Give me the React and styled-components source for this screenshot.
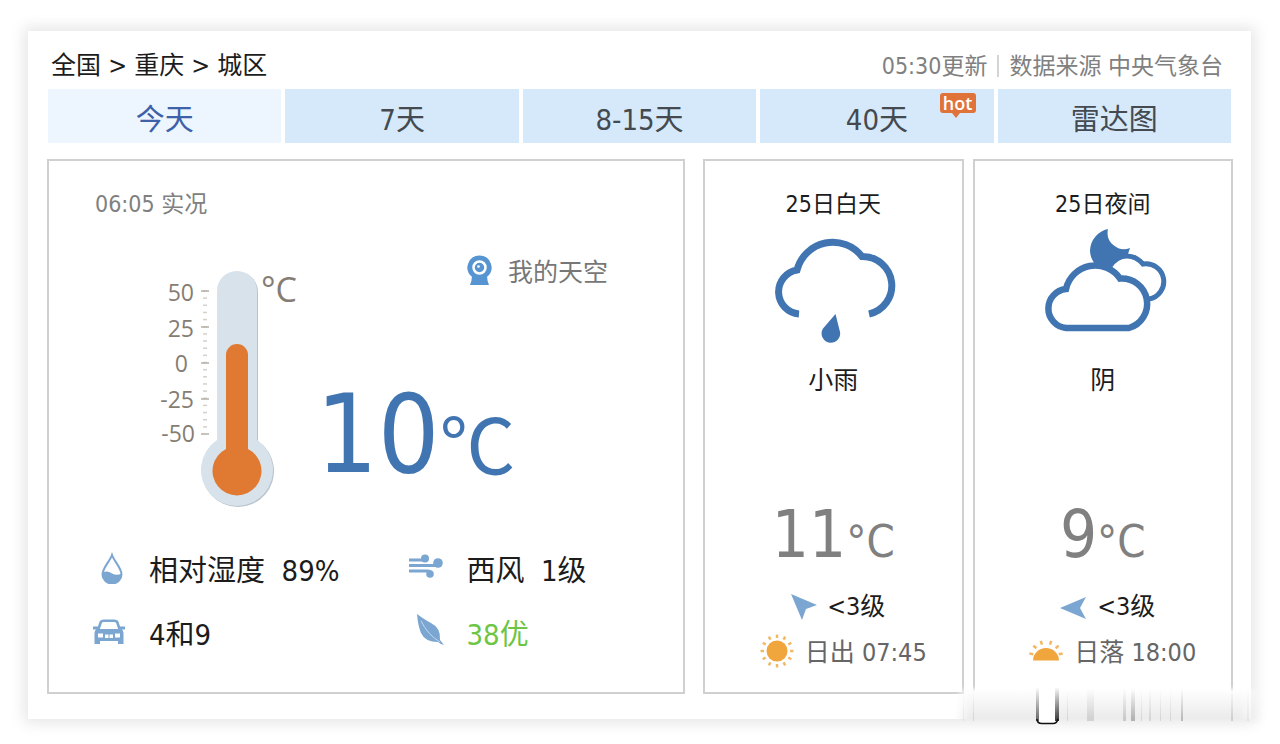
import React from "react";
import styled, { createGlobalStyle } from "styled-components";

const latin = '"DejaVu Sans Condensed", "Tahoma", "Noto Sans"';
const BLUE = "#4175b2";
const SOFT = "#7ba6d1";

const GlobalStyle = createGlobalStyle`
  *, *::before, *::after { box-sizing: border-box; }
  body {
    margin: 0;
    background: #fff;
    color: #1c1c1c;
    font-family: ${latin}, "Noto Sans CJK SC", sans-serif;
  }
  a { color: inherit; text-decoration: none; }
`;

const Page = styled.div`
  padding: 31px 29px 24px 28px;
`;

const Panel = styled.main`
  position: relative;
  padding: 16px 20px 25px;
  background: #fff;
  box-shadow: 0 0 14px 4px rgba(0, 0, 0, 0.1);
`;

const Header = styled.header`
  display: flex;
  justify-content: space-between;
  height: 42px;
  padding: 0 8px 0 3px;
  line-height: 38px;
`;

const Breadcrumb = styled.nav`
  font-size: 25px;
`;

const Source = styled.div`
  display: flex;
  align-items: center;
  height: 38px;
  font-size: 23px;
  color: #808080;
`;

const Divider = styled.span`
  width: 2px;
  height: 22px;
  margin: 0 10px;
  background: #d4d4d4;
`;

const Tabs = styled.nav`
  display: flex;
  gap: 4px;
`;

const Tab = styled.a`
  position: relative;
  flex: 1;
  height: 54px;
  line-height: 62px;
  font-size: 29px;
  text-align: center;
  color: ${(p) => (p.$active ? "#3d62a8" : "#444a50")};
  background: ${(p) => (p.$active ? "#edf6fe" : "#d5e9fb")};
`;

const Hot = styled.span`
  position: absolute;
  top: 4px;
  right: 18px;
  width: 36px;
  height: 20px;
  border-radius: 3px;
  background: #e0733a;
  color: #fff;
  font: 600 18px/20px "Open Sans", sans-serif;

  &::after {
    content: "";
    position: absolute;
    left: 12px;
    top: 20px;
    border: 4px solid transparent;
    border-top: 5px solid #e0733a;
    border-bottom: 0;
  }
`;

const Cards = styled.div`
  display: grid;
  grid-template-columns: minmax(0, 638fr) minmax(0, 530fr);
  gap: 18px;
  margin: 16px -2px 0 -1px;
`;

const Pair = styled.div`
  display: grid;
  grid-template-columns: 1fr 1fr;
  gap: 9px;
`;

const Card = styled.section`
  border: 2px solid #d0d0d0;
`;

const NowCard = styled(Card)`
  padding: 24px 0 28px 42px;
`;

const Observed = styled.div`
  padding-left: 4px;
  font-size: 23px;
  line-height: 38px;
  color: #808080;
`;

const Scene = styled.div`
  display: flex;
  align-items: flex-end;
  gap: 16px;
  height: 260px;
  margin: 27px 0 26px;
  padding-left: 65px;
`;

const Reading = styled.div`
  display: flex;
  flex-direction: column;
  justify-content: space-between;
  height: 260px;
  padding-bottom: 15px;
`;

const SkyLink = styled.a`
  display: flex;
  align-items: center;
  gap: 16px;
  height: 40px;
  margin-left: 151px;
  font-size: 25px;
  color: #777;
`;

const NowTemp = styled.div`
  display: flex;
  align-items: flex-start;
  height: 120px;
  font-size: 108px;
  line-height: 120px;
  color: ${BLUE};
`;

const Celsius = styled.span`
  margin-top: 28px;
  font: 76px/76px "Noto Sans CJK SC", sans-serif;
`;

const Stats = styled.div`
  display: grid;
  grid-template-columns: 318fr 275fr;
`;

const Stat = styled.div`
  display: flex;
  align-items: center;
  gap: 22px;
  height: 64px;
  font-size: 29px;
  white-space: pre;
  color: ${(p) => (p.$good ? "#6cc644" : "inherit")};
`;

const IconBox = styled.span`
  display: flex;
  justify-content: center;
  width: 36px;
`;

const DayCard = styled(Card)`
  display: flex;
  flex-direction: column;
  align-items: center;
  padding: 24px 0 19px;
`;

const DayTitle = styled.h2`
  margin: 0 0 5px;
  font-size: 23px;
  font-weight: 400;
  line-height: 38px;
`;

const Condition = styled.div`
  margin: 18px 0 95px;
  font-size: 25px;
  line-height: 38px;
`;

const DayTemp = styled.div`
  height: 78px;
  margin-bottom: 8px;
  font-size: 65px;
  line-height: 80px;
  color: #808080;
`;

const DayUnit = styled.span`
  font-size: 45px;
  line-height: 1;
`;

const Line = styled.div`
  display: flex;
  align-items: center;
  gap: ${(p) => p.$gap}px;
  height: 46px;
  padding-left: ${(p) => p.$indent}px;
  font-size: 25px;
  color: ${(p) => p.$color || "inherit"};
`;

const Smear = styled.svg`
  position: absolute;
  right: -12px;
  bottom: -7px;
  width: 308px;
  height: 40px;
`;

const minorTicks = Array.from({ length: 20 }, (_, i) => 27 + i * 7.15);
const scale = [
  ["50", 38, 37, 27],
  ["25", 38, 73, 63],
  ["0", 32, 108, 99],
  ["-25", 38, 144, 135],
  ["-50", 39, 178, 170],
];

function Thermometer() {
  return (
    <svg width="144" height="246" viewBox="0 0 144 246" fontFamily="Open Sans, sans-serif" fill="#857d74">
      {minorTicks.map((y) => (
        <path key={y} d={`M47 ${y}h4`} stroke="#d5d0ca" strokeWidth="1.5" />
      ))}
      {scale.map(([label, x, y, tick]) => (
        <g key={label}>
          <text x={x} y={y} textAnchor="end" fontSize="23" fontWeight="500">{label}</text>
          <path d={`M45 ${tick}h8`} stroke="#b5aea6" strokeWidth="1.5" />
        </g>
      ))}
      <path d="M61 27a20 20 0 0 1 40 0V176a36 36 0 1 1-40 0Z" fill="#b9c3cb" transform="translate(1 1)" />
      <path d="M61 27a20 20 0 0 1 40 0V176a36 36 0 1 1-40 0Z" fill="#d8e2ea" />
      <path d="M70 91a11 11 0 0 1 22 0V185a24.5 24.5 0 1 1-22 0Z" fill="#e07a32" />
      <text x="105" y="38" fontSize="34">°C</text>
    </svg>
  );
}

const CameraIcon = () => (
  <svg width="25" height="31" viewBox="0 0 25 31">
    <path d="M12.5 0.5a12 12 0 0 1 7.6 21.3Q20 25 22 30H3Q5 25 4.9 21.8A12 12 0 0 1 12.5 0.5Z" fill="#5794d2" />
    <circle cx="12.5" cy="12.5" r="6" fill="none" stroke="#fff" strokeWidth="2.5" />
    <circle cx="11.5" cy="11.5" r="1.3" fill="#fff" />
  </svg>
);

const DropIcon = () => (
  <svg width="28" height="32" viewBox="-6 -1 28 32">
    <path d="M11 2C9 8 1.5 15 1.5 21.5a9.5 9 0 0 0 19 0C20.5 15 13 8 11 2Z" fill="#fff" stroke={SOFT} strokeWidth="2" />
    <path d="M1.5 20Q6 17 11 20.5Q16 23 20.5 20.5a9.5 9.5 0 0 1-19 1Z" fill={SOFT} />
  </svg>
);

const CarIcon = () => (
  <svg width="32" height="26" viewBox="0 0 32 26">
    <path d="M5.5 10L7.5 4Q8 1.8 11 1.8H21Q24 1.8 24.5 4L26.5 10" fill="none" stroke={SOFT} strokeWidth="2.6" />
    <path d="M0 7.5h5v3H0ZM27 7.5h5v3H27ZM4 10H28Q30.5 11 30.5 14V25H25V22H7V25H1.5V14Q1.5 11 4 10Z" fill={SOFT} />
    <path d="M5 14.5h5v4H5ZM22 14.5h5v4H22ZM12 15.5h3.5v3.5H12ZM16.5 15.5H20v3.5h-3.500Z" fill="#fff" />
  </svg>
);

const WindIcon = () => (
  <svg width="34" height="28" viewBox="0 0 34 28" fill="none" stroke={SOFT} strokeWidth="3">
    <path d="M0 6H14Q17 6 17 4M0 11.5H24Q29 12 30 9M0 17H18Q22 17 22 20" />
    <g fill={SOFT} stroke="none">
      <circle cx="16" cy="4.5" r="4" />
      <circle cx="29" cy="9" r="4.8" />
      <circle cx="21" cy="20" r="3.8" />
    </g>
  </svg>
);

const LeafIcon = () => (
  <svg width="36" height="38" viewBox="-8 5 36 38">
    <path d="M1 1Q9 7 15 10Q25 15 24 27L28 32Q24 31 22 29Q9 29 5 20Q2 13 1 1Z" fill={SOFT} transform="translate(0 5)" />
    <path d="M5 13Q12 27 24 34" fill="none" stroke="#c4d9ee" />
  </svg>
);

const RainIcon = () => (
  <svg width="130" height="116" viewBox="0 0 130 116">
    <path
      d="M31 86A22.2 22.2 0 0 1 29 42A37 37 0 0 1 94 28.5A29.1 29.1 0 0 1 101 86"
      fill="none"
      stroke={BLUE}
      strokeWidth="7"
    />
    <path d="M67.5 86L71.5 102A9.3 9.3 0 1 1 55 100.5Z" fill={BLUE} />
  </svg>
);

const CloudNightIcon = () => (
  <svg width="130" height="116" viewBox="0 0 130 116">
    <path d="M70 1A23 23 0 0 0 52 22C52 32 58 37 62 42L72 44Q78 29 89 29L92 20A16.5 16.5 0 0 1 70 1Z" fill={BLUE} />
    <path d="M72 38Q79 28 89 28Q98 28 105 36A17.6 17.6 0 0 1 111 71" fill="#fff" stroke={BLUE} strokeWidth="5" />
    <path
      d="M28 100A19.6 19.6 0 0 1 28 61A30 30 0 0 1 82 50.5A25.3 25.3 0 0 1 91 100Z"
      fill="#fff"
      stroke={BLUE}
      strokeWidth="6.5"
    />
  </svg>
);

const ArrowNW = () => (
  <svg width="26" height="31" viewBox="0 -5 26 31">
    <path d="M0 0L26 11L15 15L11 26Z" fill={SOFT} />
  </svg>
);

const ArrowW = () => (
  <svg width="27" height="30" viewBox="0 -2 27 30">
    <path d="M0 17L26 6L20 17L26 28Z" fill={SOFT} />
  </svg>
);

const rays = Array.from({ length: 12 }, (_, i) => i * 30);

const SunriseIcon = () => (
  <svg width="34" height="38" viewBox="-17 -20 34 38">
    <circle r="10.5" fill="#f0a63c" />
    {rays.map((a) => (
      <path key={a} d="M0 -13V-16.5" stroke="#f2b865" strokeWidth="2.5" transform={`rotate(${a})`} />
    ))}
  </svg>
);

const SunsetIcon = () => (
  <svg width="34" height="30" viewBox="-17 -22 34 30">
    <path d="M-13 3.5A13 12.5 0 0 1 13 3.5Z" fill="#f0a63c" />
    {[-78, -48, -18, 18, 48, 78].map((a) => (
      <path key={a} d="M0 -13V-17" stroke="#f3b75f" strokeWidth="2.5" transform={`rotate(${a})`} />
    ))}
  </svg>
);

/* x, width, opacity of each dark streak in the corner */
const streaks = [
  [8, 1, 0.12], [18, 1, 0.12], [112, 1, 0.12], [132, 7, 0.14], [168, 3, 0.18],
  [176, 4, 0.3], [186, 1, 0.12], [194, 2, 0.12], [205, 1, 0.12], [215, 1, 0.12],
  [226, 2, 0.26], [276, 2, 0.15], [292, 2, 0.1],
];

function CornerSmear() {
  return (
    <Smear viewBox="0 0 308 40" preserveAspectRatio="none" aria-hidden="true">
      <defs>
        <linearGradient id="veil" x1="0" y1="0" x2="0" y2="1">
          <stop offset="0" stopColor="#fff" stopOpacity="0" />
          <stop offset="0.15" stopColor="#fdfdfd" />
          <stop offset="0.85" stopColor="#ebebeb" />
          <stop offset="1" stopColor="#f4f4f4" />
        </linearGradient>
        <linearGradient id="sides" x1="0" y1="0" x2="1" y2="0">
          <stop offset="0" stopColor="#fff" stopOpacity="0" />
          <stop offset="0.05" stopColor="#fff" />
          <stop offset="0.92" stopColor="#fff" />
          <stop offset="1" stopColor="#fff" stopOpacity="0" />
        </linearGradient>
        <linearGradient id="streak" x1="0" y1="0" x2="0" y2="1">
          <stop offset="0" stopColor="#222" stopOpacity="0" />
          <stop offset="1" stopColor="#222" />
        </linearGradient>
        <mask id="fade"><rect width="308" height="40" fill="url(#sides)" /></mask>
      </defs>
      <g mask="url(#fade)">
        <rect width="308" height="38" fill="url(#veil)" />
        {streaks.map(([x, w, o]) => (
          <rect key={x} x={x} y="2" width={w} height="33" fill="url(#streak)" opacity={o} />
        ))}
        <rect x="82" y="2" width="20" height="35" rx="4" fill="#fff" />
        <rect x="81" y="1" width="3" height="34" fill="url(#streak)" opacity="0.7" />
        <rect x="100" y="1" width="4" height="34" fill="url(#streak)" opacity="0.9" />
        <path d="M82 33Q82 37.500 87 37.500H98Q102 37.500 103 33" fill="none" stroke="#111" strokeWidth="1.6" />
      </g>
    </Smear>
  );
}

const tabs = [
  { label: "今天", active: true },
  { label: "7天" },
  { label: "8-15天" },
  { label: "40天", hot: true },
  { label: "雷达图" },
];

function Day({ title, icon, condition, temp, arrow, wind, sun, sunText }) {
  return (
    <DayCard>
      <DayTitle>{title}</DayTitle>
      {icon}
      <Condition>{condition}</Condition>
      <DayTemp>{temp}<DayUnit>°C</DayUnit></DayTemp>
      <Line $gap={10} $indent={10}>{arrow}<span>{wind}</span></Line>
      <Line $gap={11} $indent={20} $color="#666">{sun}<span>{sunText}</span></Line>
    </DayCard>
  );
}

export default function App() {
  return (
    <>
      <GlobalStyle />
      <Page>
        <Panel>
          <Header>
            <Breadcrumb>
              <a href="#china">全国</a> &gt; <a href="#chongqing">重庆</a> &gt; <a href="#city">城区</a>
            </Breadcrumb>
            <Source>
              <span>05:30更新</span>
              <Divider />
              <span>数据来源 中央气象台</span>
            </Source>
          </Header>
          <Tabs>
            {tabs.map((t) => (
              <Tab key={t.label} href="#forecast" $active={t.active}>
                {t.label}
                {t.hot && <Hot>hot</Hot>}
              </Tab>
            ))}
          </Tabs>
          <Cards>
            <NowCard>
              <Observed>06:05 实况</Observed>
              <Scene>
                <Thermometer />
                <Reading>
                  <SkyLink href="#sky"><CameraIcon />我的天空</SkyLink>
                  <NowTemp>10<Celsius>℃</Celsius></NowTemp>
                </Reading>
              </Scene>
              <Stats>
                <Stat><IconBox><DropIcon /></IconBox>{"相对湿度  89%"}</Stat>
                <Stat><IconBox><WindIcon /></IconBox>{"西风  1级"}</Stat>
                <Stat><IconBox><CarIcon /></IconBox>4和9</Stat>
                <Stat $good><IconBox><LeafIcon /></IconBox>38优</Stat>
              </Stats>
            </NowCard>
            <Pair>
              <Day
                title="25日白天"
                icon={<RainIcon />}
                condition="小雨"
                temp="11"
                arrow={<ArrowNW />}
                wind="<3级"
                sun={<SunriseIcon />}
                sunText="日出 07:45"
              />
              <Day
                title="25日夜间"
                icon={<CloudNightIcon />}
                condition="阴"
                temp="9"
                arrow={<ArrowW />}
                wind="<3级"
                sun={<SunsetIcon />}
                sunText="日落 18:00"
              />
            </Pair>
          </Cards>
          <CornerSmear />
        </Panel>
      </Page>
    </>
  );
}
